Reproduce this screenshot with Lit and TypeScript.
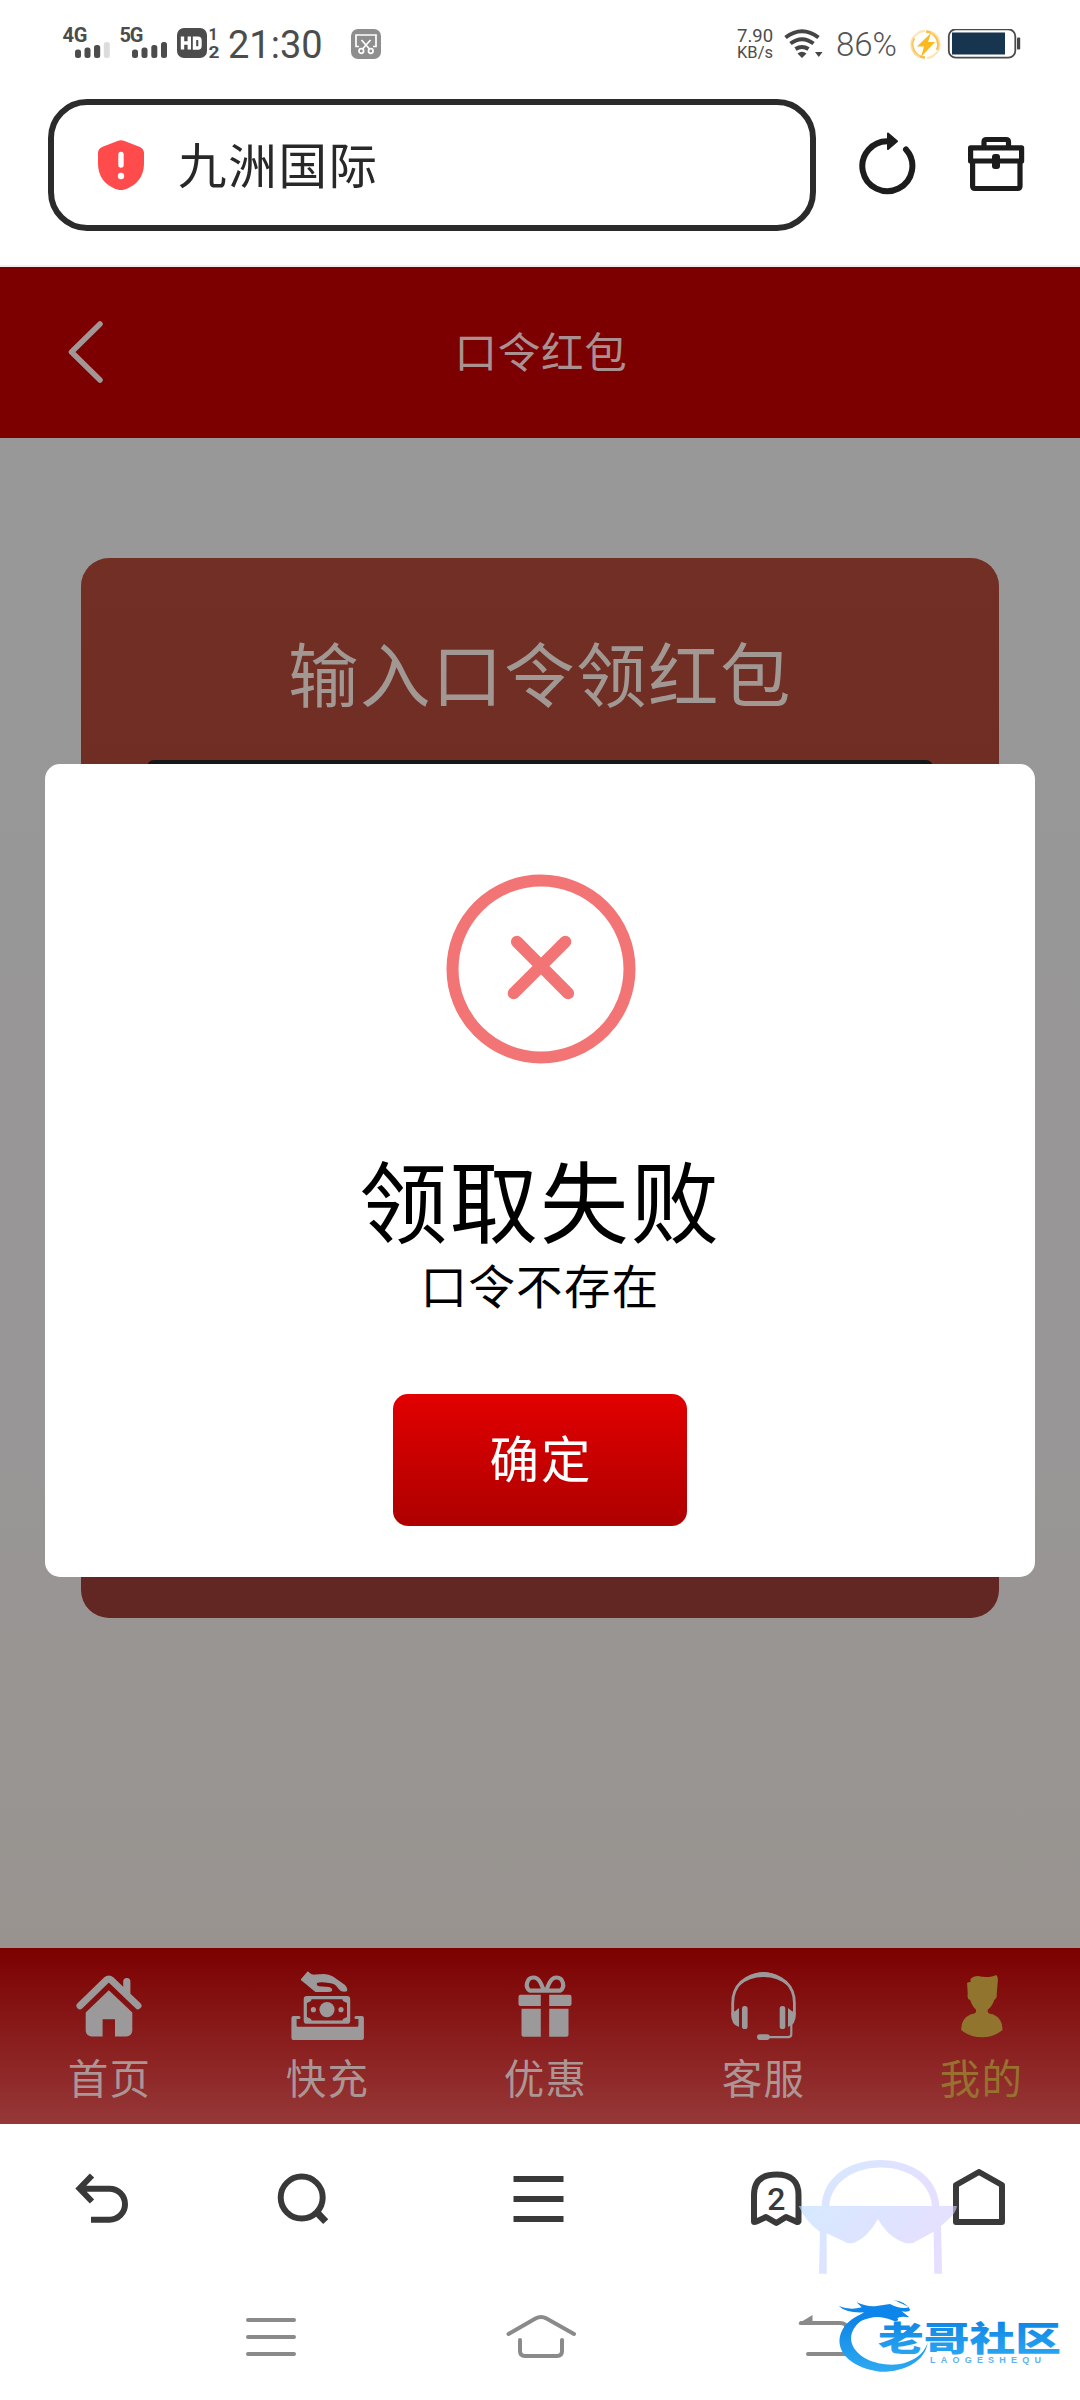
import { LitElement, html, css, svg } from "lit";
import { customElement, property } from "lit/decorators.js";

const cjk = css`"Noto Sans CJK SC", "Noto Sans", sans-serif`;

/* Tab glyphs; each viewBox covers an 80x76 px cell. */
const tabIcons: Record<string, unknown> = {
  home: svg`<svg width="80" height="76" viewBox="69 1970 80 76">
    <path d="M80 2006.7 L106.2 1981.2 Q108.8 1979 111.4 1981.2 L138 2006.7" fill="none" stroke="currentColor" stroke-width="7" stroke-linecap="round" stroke-linejoin="round"/>
    <path d="M123.2 1991 V1982.5 a3.6 3.6 0 0 1 7.2 0 V1998z" fill="currentColor"/>
    <path d="M108.8 1991.3 L132.3 2013.6 V2031.5 a6 6 0 0 1 -6 6 H115 V2020.3 H102.6 V2037.5 H91.7 a6 6 0 0 1 -6 -6 V2013.6z" fill="currentColor"/>
  </svg>`,
  deposit: svg`<svg width="80" height="76" viewBox="287 1970 80 76">
    <path d="M293 2017 h6 q1.500 0 1.500 1.500 t-1.500 1.500 h-2.400 v6.500 q0 1.300 1.300 1.300 h59.200 q1.300 0 1.300 -1.300 v-6.500 h-2.500 q-1.500 0 -1.500 -1.500 t1.500 -1.500 h6 q2 0 2 2 v20 q0 2 -2 2 h-68.500 q-2 0 -2 -2 v-20 q0 -2 2 -2z" fill="currentColor"/>
    <rect x="305.300" y="1998.600" width="43.300" height="24.600" rx="1.500" fill="none" stroke="currentColor" stroke-width="3.200"/>
    <path d="M306 1999h6l-1 3-4 2h-1zM348 1999h-6l1 3 4 2h1zM306 2023h6l-1-3-4-2h-1zM348 2023h-6l1-3 4-2h1z" fill="currentColor"/>
    <circle cx="327" cy="2010.600" r="7.600" fill="currentColor"/><circle cx="313.400" cy="2010.700" r="2.600" fill="currentColor"/><circle cx="341" cy="2010.700" r="2.600" fill="currentColor"/>
    <path d="M307.500 1972.600 Q308.500 1972.400 309.200 1973.500 Q311 1976 315 1975.600 L324 1975 Q329 1975 333 1977.500 L345 1986 Q348 1989.500 347 1992.300 Q341 1994 337.500 1988.500 Q335 1984.300 329 1984 Q321 1982.500 317 1984 Q316 1986.500 319 1987.200 L329 1988 Q333 1989 332 1992 Q331 1993 328 1993 H315.500 Q311 1989.500 307 1986 L302 1982 Q300 1981 301.500 1979.500z" fill="currentColor"/>
  </svg>`,
  gift: svg`<svg width="80" height="76" viewBox="505.500 1970 80 76">
    <path d="M544.800 1993 C541 1982 538.500 1978.500 534 1978.500 C527 1978.500 525 1988.500 530.500 1991.700 H560.500 C566 1988.500 564 1978.500 557 1978.500 C552.500 1978.500 550 1982 546.200 1993" fill="none" stroke="currentColor" stroke-width="4.200"/>
    <path d="M521 1995.700 h20.300 v11.300 h-20.300 q-2 0 -2 -2 v-7.300 q0 -2 2 -2z M549.700 1995.700 h20.300 q2 0 2 2 v7.300 q0 2 -2 2 h-20.300z M522 2009.700 h19.300 v28 h-17.300 q-2 0 -2 -2z M549.700 2009.700 h19.300 v26 q0 2 -2 2 h-17.300z" fill="currentColor"/>
  </svg>`,
  headset: svg`<svg width="80" height="76" viewBox="723 1970 80 76">
    <path d="M732.700 2014 V2004 C732.700 1987 745 1974.800 763.500 1974.800 S794.400 1987 794.400 2004 V2014" fill="none" stroke="currentColor" stroke-width="2.800"/>
    <path d="M739 1987 Q748 1973 763.500 1973 T788 1987 Q778 1978 763.500 1978 T739 1987z" fill="currentColor"/>
    <path d="M739 2009 V2028 Q731 2026 731 2014 Q735 2013 739 2009z M788 2009 V2028 Q796 2026 796 2014 Q792 2013 788 2009z" fill="currentColor"/>
    <rect x="742" y="2007" width="5.600" height="23" rx="2.600" fill="currentColor"/><rect x="779.700" y="2007" width="5.600" height="23" rx="2.600" fill="currentColor"/>
    <path d="M791.300 2025 V2035 Q791.300 2038.200 788 2038.200 H768" fill="none" stroke="currentColor" stroke-width="2.200"/>
    <rect x="757" y="2035.300" width="12.800" height="5.600" rx="2.800" fill="currentColor"/>
  </svg>`,
  user: svg`<svg width="80" height="76" viewBox="941 1970 80 76">
    <path transform="translate(540 1930) scale(.3444 .3333)" d="M1250 150 Q1258 141 1272 141 Q1290 145 1308 143 Q1320 141 1324 138 Q1331 142 1329 160 L1326 196 Q1328 208 1319 213 Q1313 232 1300 242 V248 Q1302 254 1315 256 Q1344 269 1343 303 Q1318 325 1283 325 T1223 303 Q1222 269 1251 256 Q1264 254 1266 248 V242 Q1255 232 1249 213 Q1239 209 1242 196 L1240 162 Q1243 159 1250 159z" fill="currentColor"/>
  </svg>`,
};

@customElement("status-bar")
export class StatusBar extends LitElement {
  static styles = css`
    :host { display: flex; align-items: center; height: 88px; box-sizing: border-box; padding-left: 62px; font-family: Roboto, sans-serif; color: #4c4c4c; }
    svg { display: block; flex: none; }
    .sig text { font: 700 20px Roboto, sans-serif; }
    .sims { margin-right: 8px; }
    .time { font-size: 38px; line-height: 46px; width: 123px; white-space: nowrap; padding-top: 1px; }
    .shot { margin-right: auto; }
    .speed { width: 47px; text-align: left; }
    .wifi { margin-right: 12px; }
    .percent { font-size: 33px; font-weight: 300; width: 74px; color: #555; line-height: 40px; padding-top: 2px; }
    .bat { margin-right: 59px; margin-left: 6px; }
    .speed span { display: block; font-size: 16.500px; line-height: 15px; }
    .speed .n { font-size: 18.500px; line-height: 17px; }
  `;
  render() {
    return html`
      <svg class="sims sig" width="158" height="40" viewBox="62 24 158 40" fill="#4c4c4c">
        <text x="62.500" y="42" textLength="25">4G</text>
        <rect x="75" y="49.500" width="6" height="8.500" rx="2.500"/><rect x="84.500" y="47.500" width="6" height="10.500" rx="2.500"/><rect x="94" y="45" width="6.200" height="13" rx="2.500"/><rect x="103.800" y="42" width="6" height="16" rx="2.500" fill="#dcdcdc"/>
        <text x="119.500" y="42" textLength="24">5G</text>
        <rect x="132" y="49.500" width="6" height="8.500" rx="2.500"/><rect x="141.500" y="47.500" width="6" height="10.500" rx="2.500"/><rect x="151.300" y="45" width="6" height="13" rx="2.500"/><rect x="161" y="42" width="6" height="16" rx="2.500"/>
        <rect x="177" y="28" width="30" height="30" rx="7"/>
        <path d="M182.500 36.500V49.500M189.300 36.500V49.500M182.500 43H189M194.500 38.200H198Q200 38.200 200 40.500V46Q200 48 198 48H194.500z" fill="none" stroke="#fff" stroke-width="3.400"/>
        <text x="208.500" y="40" style="font-size:16px">1</text><text x="208.500" y="57.500" style="font-size:16px" textLength="11" lengthAdjust="spacingAndGlyphs">2</text>
      </svg>
      <span class="time">21:30</span>
      <svg class="shot" width="30" height="30" viewBox="0 0 30 30" fill="none" stroke="#fff" stroke-width="1.700">
        <rect width="30" height="30" rx="7" fill="#8e8e8e" stroke="none"/>
        <path d="M8 17.500H5V6H25V17.500H22M10.500 11L18.500 20M19.500 11L11.500 20"/><circle cx="10.300" cy="22" r="2.300"/><circle cx="19.800" cy="22" r="2.300"/>
      </svg>
      <div class="speed"><span class="n">7.90</span><span>KB/s</span></div>
      <svg class="wifi" width="40" height="30" viewBox="786 29 40 30" fill="none" stroke="#454545" stroke-width="4">
        <path d="M787.500 37.500 Q804 25 820.500 37.500M792.500 43.500 Q804 35 815.500 43.500M797.500 49 Q804 45 810.500 49"/>
        <path d="M799.500 53.500Q804 50 808.500 53.500L804 58z M817 52h7.500l-3.700 5z" fill="#454545" stroke="none"/>
      </svg>
      <span class="percent">86%</span>
      <svg width="31" height="31" viewBox="911 27 31 31" fill="none">
        <path d="M926 55.500A13 13 0 0 1 915 36M927 29.500A13 13 0 0 1 938 48" stroke="#fbc04a" stroke-width="2.600"/>
        <path d="M921 55A13 13 0 0 1 918 32Q921 29 926 29M932 30A13 13 0 0 1 935 53Q932 56 928 56" stroke="#fbdf9f" stroke-width="2" opacity=".8"/>
        <path d="M932 31L918 44.500H925L922 55L936 40H929z" fill="#fab91f"/>
      </svg>
      <svg class="bat" width="74" height="31" viewBox="947 27.500 74 31">
        <rect x="948.800" y="27.800" width="66.500" height="28.400" rx="7" fill="none" stroke="#4a4a4a" stroke-width="1.800"/>
        <rect x="952" y="31" width="53" height="22" fill="#18354f"/><rect x="1017" y="36" width="3.200" height="12" rx="1" fill="#444"/>
      </svg>`;
  }
}

@customElement("address-row")
export class AddressRow extends LitElement {
  static styles = css`
    :host { display: flex; align-items: flex-start; height: 179px; box-sizing: border-box; padding: 11px 0 0 48px; border-bottom: 2px solid #f6eeee; }
    svg { display: block; flex: none; }
    .box { width: 768px; height: 132px; box-sizing: border-box; border: 6px solid #2b2b2b; border-radius: 39px; display: flex; align-items: center; padding-left: 43px; gap: 33px; margin-right: 41px; }
    .name { font-family: ${cjk}; font-size: 48.500px; letter-spacing: 1.700px; line-height: 60px; color: #282828; padding-bottom: 4px; }
    .reload { margin-top: 32px; margin-right: 49px; }
    .case { margin-top: 36px; }
  `;
  render() {
    return html`
      <div class="box">
        <svg width="48" height="52" viewBox="97 139 48 52">
          <path d="M117.500 141 Q121 139.500 124.500 141 L140 147 Q144 149 144 153 V163 C144 179 134 186.500 124.500 189.500 Q121 190.500 117.500 189.500 C108 186.500 98 179 98 163 V153 Q98 149 102 147z" fill="#ff4b4b"/>
          <path d="M121 154.500V165" stroke="#fff" stroke-width="5.400" stroke-linecap="round"/><circle cx="121" cy="176" r="3.200" fill="#fff"/>
        </svg>
        <span class="name">九洲国际</span>
      </div>
      <svg class="reload" width="60" height="64" viewBox="858 131 60 64">
        <path d="M907 149.500A25 25 0 1 1 890 141.200" fill="none" stroke="#1c1c1c" stroke-width="6" stroke-linecap="round"/>
        <path d="M889 133.500L898 141.300L889 149z" fill="#1c1c1c" stroke="#1c1c1c" stroke-width="2" stroke-linejoin="round"/>
      </svg>
      <svg class="case" width="60" height="58" viewBox="966 135 60 58" fill="none" stroke="#1c1c1c" stroke-width="5.200" stroke-linejoin="round">
        <path d="M984 147V142Q984 139.500 986.500 139.500H1006Q1008.500 139.500 1008.500 142V147M970.600 147.800H1021.600V161H970.600z M972.600 161V186Q972.600 188.500 975 188.500H1017.500Q1020 188.500 1020 186V161"/>
        <rect x="992" y="154" width="8" height="15" rx="3" fill="#1c1c1c" stroke="none"/>
      </svg>`;
  }
}

@customElement("result-dialog")
export class ResultDialog extends LitElement {
  @property() heading = "";
  @property() message = "";
  @property() action = "";
  static styles = css`
    :host { display: flex; flex-direction: column; align-items: center; width: 990px; height: 813px; box-sizing: border-box; padding-top: 110px; background: #fff; border-radius: 15px; color: #000; font-family: ${cjk}; }
    svg { display: block; margin-left: 1px; }
    .heading { font-size: 88.500px; line-height: 100px; letter-spacing: 2px; margin-top: 83px; }
    .message { font-size: 46.500px; line-height: 60px; letter-spacing: 1.300px; margin-top: 7px; }
    .ok { width: 294px; height: 132px; margin-top: 80px; padding: 0 0 7px 2px; border-radius: 15px; border: 0; background: linear-gradient(#e20000, #ae0000); color: #fff; font: 400 49.500px/60px ${cjk}; letter-spacing: 2px; }
  `;
  render() {
    return html`
      <svg width="190" height="190" viewBox="445.500 874.500 190 190" fill="none" stroke="#f27474" stroke-width="12" stroke-linecap="round">
        <circle cx="540.500" cy="969.500" r="88.500"/><path d="M516.400 942.300L567.600 993.700M564.800 942.300L513.200 993.700"/>
      </svg>
      <div class="heading">${this.heading}</div>
      <div class="message">${this.message}</div>
      <button class="ok">${this.action}</button>`;
  }
}

@customElement("tab-strip")
export class TabStrip extends LitElement {
  static styles = css`
    :host { display: flex; height: 176px; overflow: hidden; background: linear-gradient(#7c0000, #963838); color: #a19c9c; font-family: ${cjk}; }
    .tab { flex: none; width: 218px; display: flex; flex-direction: column; align-items: center; padding-top: 21px; }
    .tab svg { display: block; }
    .icon { color: #9b9999; }
    .label { font-size: 40.500px; line-height: 60px; letter-spacing: 1.200px; margin-top: 2px; padding-left: 1px; color: #ab9595; }
    .active .icon { color: #91752f; }
    .active .label { color: #98702f; }
  `;
  tabs = [
    ["home", "首页"], ["deposit", "快充"], ["gift", "优惠"], ["headset", "客服"], ["user", "我的"],
  ];
  render() {
    return this.tabs.map(([icon, label]) => html`
      <div class="tab ${icon === "user" ? "active" : ""}"><span class="icon">${tabIcons[icon]}</span><span class="label">${label}</span></div>`);
  }
}

@customElement("bottom-bars")
export class BottomBars extends LitElement {
  static styles = css`
    :host { display: block; position: relative; height: 276px; background: #fff; }
    svg { display: block; }
    .browser { display: grid; grid-template-columns: 202px 200px 273px 203px 202px; height: 150px; place-items: center; }
    .system { display: grid; grid-template-columns: repeat(3, 270px); justify-content: center; padding-left: 1px; height: 126px; place-items: center; }
    .mark { position: absolute; right: 0; bottom: 0; }
    .count { font: 500 32px Roboto, sans-serif; }
    .brand { font: 900 34px ${cjk}; }
    .latin { font: 700 9px "Liberation Sans", sans-serif; }
  `;
  render() {
    return html`
      <div class="browser">
        <svg width="60" height="60" viewBox="71 2169 60 60" fill="none" stroke="#393939" stroke-width="6"><path d="M92 2175.500L79.500 2188.500L92 2201.500M80 2188.700H109.500A15.500 15.500 0 0 1 109.500 2219.700H91"/></svg>
        <svg width="60" height="60" viewBox="272 2169 60 60" fill="none" stroke="#393939" stroke-width="6"><circle cx="301.700" cy="2197.600" r="21"/><path d="M315.500 2211L325.700 2221.700" stroke-width="7"/></svg>
        <svg width="60" height="60" viewBox="509.500 2169 60 60" fill="none" stroke="#393939" stroke-width="6"><path d="M514 2179H564M514 2199H564M514 2219H564"/></svg>
        <svg width="60" height="60" viewBox="747 2169 60 60" fill="none" stroke="#393939" stroke-width="6" stroke-linejoin="round"><path d="M754 2221.500V2195Q754 2174.500 776.300 2174.500T798.500 2195V2221.500Q798 2222.500 796 2221.500L786 2217L776.300 2223L766 2217L756.500 2221.500Q754 2222.500 754 2221.500z"/><text class="count" x="776.300" y="2210" text-anchor="middle" fill="#393939" stroke="none">2</text></svg>
        <svg width="60" height="60" viewBox="949 2169 60 60" fill="none" stroke="#393939" stroke-width="6" stroke-linejoin="round"><path d="M956 2185L979 2172L1002 2185V2222H956z"/></svg>
      </div>
      <div class="system">
        <svg width="70" height="60" viewBox="236 2307 70 60" fill="none" stroke="#8a8a8a" stroke-width="4" stroke-linecap="round"><path d="M248 2320H294M248 2337H294M248 2354H294"/></svg>
        <svg width="74" height="60" viewBox="504 2307 74 60" fill="none" stroke="#8a8a8a" stroke-width="4" stroke-linecap="round"><path d="M508.500 2334L535.500 2318.500Q541 2315.500 546.500 2318.500L574 2334M520 2340V2351Q520 2356 525 2356H557Q562 2356 562 2351V2340"/></svg>
        <svg width="70" height="60" viewBox="776 2307 70 60" overflow="visible" fill="none" stroke="#8a8a8a" stroke-width="4" stroke-linecap="round"><path d="M801 2323H840Q846 2323 847 2328M808 2354H848"/><path d="M798.500 2323.500L812.500 2315V2324.500H799z" fill="#8a8a8a" stroke="none"/></svg>
      </div>
      <svg class="mark" width="300" height="240" viewBox="780 2160 300 240" fill="none">
        <defs>
          <linearGradient id="haze" x1="0" x2="1" y1="0" y2=".4"><stop stop-color="#bcdcff"/><stop offset="1" stop-color="#d8ccff"/></linearGradient>
          <linearGradient id="ring" x1="0" x2="0" y1="0" y2="1"><stop stop-color="#087ee4"/><stop offset="1" stop-color="#2eaaf2"/></linearGradient>
        </defs>
        <g transform="translate(660 2120) scale(.33333)">
          <g opacity=".62">
            <path d="M485 258C494 74 828 74 838 258H816C805 104 520 104 508 258z" fill="url(#haze)"/>
            <path d="M416 258H891Q888 275 875 289L843 318L846 461H823L821 335L760 368Q741 374 722 364Q680 345 654 298Q620 355 583 368Q566 374 548 362L500 340V461H477L480 335Q440 308 416 258z" fill="url(#haze)"/>
          </g>
          <path d="M650 570C510 590 490 730 660 755C730 757 795 725 803 668Q785 720 715 733C590 745 510 640 640 580z" fill="url(#ring)"/>
          <path d="M536 558Q570 572 605 562L590 547Q625 562 650 558L690 552Q720 568 748 562Q715 545 700 540Q740 545 751 570Q745 578 725 574L748 592Q722 588 712 595Q720 605 700 602Q660 586 630 594Q600 600 585 615Q590 590 612 577Q560 580 536 558z" fill="#0c86ea"/>
          <g transform="scale(3)">
            <text class="brand" x="218" y="231" textLength="183" lengthAdjust="spacingAndGlyphs" fill="url(#ring)">老哥社区</text>
            <text class="latin" x="270" y="243.500" textLength="111" fill="#62b4ee">LAOGESHEQU</text>
          </g>
        </g>
      </svg>`;
  }
}

@customElement("app-root")
export class AppRoot extends LitElement {
  static styles = css`
    :host { display: block; position: relative; width: 1080px; height: 2400px; overflow: hidden; background: #fff; font-family: ${cjk}; }
    .head { display: grid; grid-template-columns: 180px 1fr 180px; align-items: center; height: 171px; background: #7c0000; }
    .head svg { display: block; margin: 0 0 2px 66px; }
    .title { text-align: center; font-size: 42.500px; letter-spacing: .8px; line-height: 60px; padding: 0 0 5px 2px; color: #aa9090; }
    .page { height: 1510px; box-sizing: border-box; padding: 120px 81px 0; background: linear-gradient(#989898, #989696 68%, #989592 88%, #98938f); }
    .card { height: 1060px; box-sizing: border-box; border-radius: 28px; padding: 63px 66px 0; background: linear-gradient(#722f24, #622623); }
    .prompt { text-align: center; font-size: 70.500px; letter-spacing: 1.500px; line-height: 100px; color: #a19894; }
    .field { height: 120px; margin-top: 39px; border-radius: 7px; background: #161616; }
    .dialog { position: absolute; left: 45px; top: 764px; }
  `;
  render() {
    return html`
      <status-bar></status-bar>
      <address-row></address-row>
      <div class="head">
        <svg width="40" height="66" viewBox="66 319.500 40 66" fill="none" stroke="#a29797" stroke-width="5.500" stroke-linecap="round" stroke-linejoin="round"><path d="M100 324.500L71.500 352.500L100 380.500"/></svg>
        <div class="title">口令红包</div>
      </div>
      <div class="page"><div class="card"><div class="prompt">输入口令领红包</div><div class="field"></div></div></div>
      <tab-strip></tab-strip>
      <bottom-bars></bottom-bars>
      <result-dialog class="dialog" heading="领取失败" message="口令不存在" action="确定"></result-dialog>`;
  }
}
